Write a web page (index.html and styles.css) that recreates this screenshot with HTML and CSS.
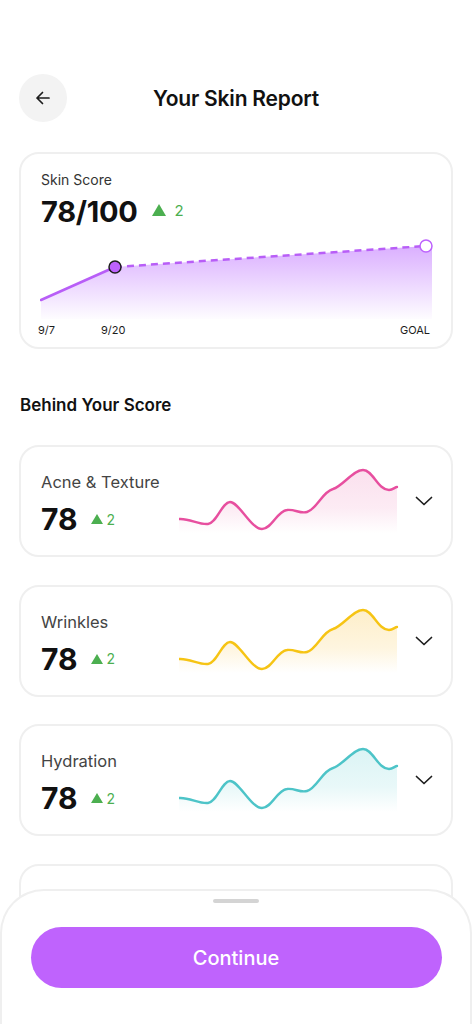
FILE: index.html
```html
<!DOCTYPE html>
<html lang="en">
<head>
<meta charset="utf-8">
<title>Your Skin Report</title>
<link rel="stylesheet" href="styles.css">
</head>
<body>
<div class="screen">
  <header class="topbar">
    <button class="back" aria-label="Back">
      <svg width="18" height="18" viewBox="0 0 18 18" fill="none" stroke="#1d1d1d" stroke-width="1.7" stroke-linecap="round" stroke-linejoin="round"><path d="M15 9H3M8.5 3.5 3 9l5.5 5.5"/></svg>
    </button>
    <h1 class="title">Your Skin Report</h1>
    <span class="spacer"></span>
  </header>

  <section class="score-card">
    <div class="card-label">Skin Score</div>
    <div class="score-row">
      <span class="score-big">78/100</span>
      <span class="delta delta-lg"><span class="tri"></span>2</span>
    </div>
    <svg class="score-chart" width="394" height="82" viewBox="0 0 394 82">
      <defs>
        <linearGradient id="gfill" x1="0" y1="0" x2="0" y2="1">
          <stop offset="0" stop-color="#d6a6ff" stop-opacity="0.9"/>
          <stop offset="1" stop-color="#d6a6ff" stop-opacity="0.03"/>
        </linearGradient>
      </defs>
      <path d="M1,61 L75,28 L386,7 L392,7 L392,80 L1,80 Z" fill="url(#gfill)"/>
      <path d="M1,61 L75,28" stroke="#b85ef7" stroke-width="2.5" fill="none" stroke-linecap="round"/>
      <path d="M75,28 L386,7" stroke="#b85ef7" stroke-width="2.5" fill="none" stroke-dasharray="7 5"/>
      <circle cx="75" cy="28" r="6" fill="#bd62fd" stroke="#1d1d1d" stroke-width="1.5"/>
      <circle cx="386" cy="7" r="6" fill="#fff" stroke="#bd62fd" stroke-width="1.5"/>
    </svg>
    <div class="chart-labels">
      <span>9/7</span>
      <span>9/20</span>
      <span class="goal">GOAL</span>
    </div>
  </section>

  <h2 class="section-title">Behind Your Score</h2>

  <div class="metrics">
    <article class="metric-card">
      <div class="metric-info">
        <div class="metric-name">Acne &amp; Texture</div>
        <div class="metric-row"><span class="metric-score">78</span><span class="delta"><span class="tri tri-sm"></span>2</span></div>
      </div>
      <svg class="spark" width="220" height="68" viewBox="0 0 220 68">
        <defs>
          <linearGradient id="gpink" x1="0" y1="0" x2="0" y2="1">
            <stop offset="0" stop-color="#f9d3e6" stop-opacity="0.7"/>
            <stop offset="0.6" stop-color="#f9d3e6" stop-opacity="0.45"/>
            <stop offset="1" stop-color="#f9d3e6" stop-opacity="0"/>
          </linearGradient>
        </defs>
        <path d="M0,54 C10,53 20,60 29,59 C38,58 43,37 51,37 C60,37 72,64 83,64 C93,64 98,46 108,45 C116,44 121,49 128,47 C138,44 143,27 154,24 C164,21 174,5 184,5 C194,5 199,25 210,25 C214,25 216,22 218,22 L218,68 L0,68 Z" fill="url(#gpink)"/>
        <path d="M0,54 C10,53 20,60 29,59 C38,58 43,37 51,37 C60,37 72,64 83,64 C93,64 98,46 108,45 C116,44 121,49 128,47 C138,44 143,27 154,24 C164,21 174,5 184,5 C194,5 199,25 210,25 C214,25 216,22 218,22" fill="none" stroke="#e74f9f" stroke-width="2.4" stroke-linecap="round"/>
      </svg>
      <svg class="chev" width="18" height="10" viewBox="0 0 18 10" fill="none" stroke="#1d1d1d" stroke-width="1.7" stroke-linecap="round" stroke-linejoin="round"><path d="M1.5 1.5 9 8.5l7.5-7"/></svg>
    </article>

    <article class="metric-card">
      <div class="metric-info">
        <div class="metric-name">Wrinkles</div>
        <div class="metric-row"><span class="metric-score">78</span><span class="delta"><span class="tri tri-sm"></span>2</span></div>
      </div>
      <svg class="spark" width="220" height="68" viewBox="0 0 220 68">
        <defs>
          <linearGradient id="gyellow" x1="0" y1="0" x2="0" y2="1">
            <stop offset="0" stop-color="#fde9b8" stop-opacity="0.75"/>
            <stop offset="0.6" stop-color="#fde9b8" stop-opacity="0.45"/>
            <stop offset="1" stop-color="#fde9b8" stop-opacity="0"/>
          </linearGradient>
        </defs>
        <path d="M0,54 C10,53 20,60 29,59 C38,58 43,37 51,37 C60,37 72,64 83,64 C93,64 98,46 108,45 C116,44 121,49 128,47 C138,44 143,27 154,24 C164,21 174,5 184,5 C194,5 199,25 210,25 C214,25 216,22 218,22 L218,68 L0,68 Z" fill="url(#gyellow)"/>
        <path d="M0,54 C10,53 20,60 29,59 C38,58 43,37 51,37 C60,37 72,64 83,64 C93,64 98,46 108,45 C116,44 121,49 128,47 C138,44 143,27 154,24 C164,21 174,5 184,5 C194,5 199,25 210,25 C214,25 216,22 218,22" fill="none" stroke="#f6c414" stroke-width="2.4" stroke-linecap="round"/>
      </svg>
      <svg class="chev" width="18" height="10" viewBox="0 0 18 10" fill="none" stroke="#1d1d1d" stroke-width="1.7" stroke-linecap="round" stroke-linejoin="round"><path d="M1.5 1.5 9 8.5l7.5-7"/></svg>
    </article>

    <article class="metric-card">
      <div class="metric-info">
        <div class="metric-name">Hydration</div>
        <div class="metric-row"><span class="metric-score">78</span><span class="delta"><span class="tri tri-sm"></span>2</span></div>
      </div>
      <svg class="spark" width="220" height="68" viewBox="0 0 220 68">
        <defs>
          <linearGradient id="gteal" x1="0" y1="0" x2="0" y2="1">
            <stop offset="0" stop-color="#d2f1f2" stop-opacity="0.8"/>
            <stop offset="0.6" stop-color="#d2f1f2" stop-opacity="0.5"/>
            <stop offset="1" stop-color="#d2f1f2" stop-opacity="0"/>
          </linearGradient>
        </defs>
        <path d="M0,54 C10,53 20,60 29,59 C38,58 43,37 51,37 C60,37 72,64 83,64 C93,64 98,46 108,45 C116,44 121,49 128,47 C138,44 143,27 154,24 C164,21 174,5 184,5 C194,5 199,25 210,25 C214,25 216,22 218,22 L218,68 L0,68 Z" fill="url(#gteal)"/>
        <path d="M0,54 C10,53 20,60 29,59 C38,58 43,37 51,37 C60,37 72,64 83,64 C93,64 98,46 108,45 C116,44 121,49 128,47 C138,44 143,27 154,24 C164,21 174,5 184,5 C194,5 199,25 210,25 C214,25 216,22 218,22" fill="none" stroke="#4dc4c8" stroke-width="2.4" stroke-linecap="round"/>
      </svg>
      <svg class="chev" width="18" height="10" viewBox="0 0 18 10" fill="none" stroke="#1d1d1d" stroke-width="1.7" stroke-linecap="round" stroke-linejoin="round"><path d="M1.5 1.5 9 8.5l7.5-7"/></svg>
    </article>

    <article class="metric-card">
      <div class="metric-info">
        <div class="metric-name">Pores</div>
        <div class="metric-row"><span class="metric-score">78</span><span class="delta"><span class="tri tri-sm"></span>2</span></div>
      </div>
    </article>
  </div>
</div>

<div class="sheet">
  <div class="handle"></div>
  <button class="continue">Continue</button>
</div>
</body>
</html>
```

FILE: styles.css
```css
* { box-sizing: border-box; }

html, body {
  margin: 0;
  padding: 0;
  background: #ffffff;
}

body {
  font-family: Inter, "Noto Sans", "Liberation Sans", sans-serif;
  color: #111;
}

.screen {
  padding: 74px 19px 40px;
}

.topbar {
  display: grid;
  grid-template-columns: 48px 1fr 48px;
  align-items: center;
  height: 48px;
}

.back {
  width: 48px;
  height: 48px;
  border-radius: 50%;
  border: none;
  background: #f3f3f3;
  display: flex;
  align-items: center;
  justify-content: center;
  padding: 0;
}

.title {
  margin: 0;
  text-align: center;
  font-size: 21px;
  font-weight: 600;
  letter-spacing: -0.2px;
  color: #111;
}

.score-card {
  margin-top: 30px;
  border: 2px solid #efefef;
  border-radius: 20px;
  padding: 17px 20px 10px 20px;
}

.card-label {
  font-size: 14px;
  line-height: 18px;
  color: #333;
}

.score-row {
  display: flex;
  align-items: center;
  gap: 15px;
  margin-top: 5px;
}

.score-big {
  font-size: 29px;
  line-height: 36px;
  font-weight: 700;
  color: #111;
  letter-spacing: -0.3px;
}

.delta {
  display: inline-flex;
  align-items: center;
  gap: 4px;
  color: #4caf50;
  font-size: 14px;
}

.delta-lg {
  font-size: 15px;
  gap: 8px;
  margin-top: -4px;
}

.tri {
  width: 0;
  height: 0;
  border-left: 7px solid transparent;
  border-right: 7px solid transparent;
  border-bottom: 12px solid #4caf50;
}

.tri-sm {
  border-left-width: 6px;
  border-right-width: 6px;
  border-bottom-width: 10px;
}

.score-chart {
  display: block;
  margin-top: 9px;
  margin-left: -1px;
}

.chart-labels {
  display: grid;
  grid-template-columns: 63px 1fr auto;
  font-size: 11px;
  line-height: 14px;
  color: #1d1d1d;
  margin-left: -3px;
  margin-right: 1px;
  margin-top: 2px;
}

.section-title {
  margin: 45px 0 0 1px;
  font-size: 17px;
  line-height: 22px;
  font-weight: 600;
  color: #111;
}

.metrics {
  margin-top: 29px;
  display: flex;
  flex-direction: column;
  gap: 27.5px;
}

.metric-card {
  height: 112px;
  border: 2px solid #efefef;
  border-radius: 20px;
  padding: 0 16px 0 20px;
  display: flex;
  align-items: center;
}

.metric-info {
  width: 138px;
  flex-shrink: 0;
  margin-top: 6px;
}

.metric-name {
  font-size: 16.5px;
  line-height: 20px;
  color: #444;
}

.metric-row {
  display: flex;
  align-items: center;
  gap: 13px;
  margin-top: 10px;
}

.metric-score {
  font-size: 30px;
  line-height: 34px;
  font-weight: 700;
  color: #111;
}

.spark {
  display: block;
  flex-shrink: 0;
  margin-top: -4px;
}

.chev {
  display: block;
  margin-left: auto;
  margin-right: 2px;
}

.sheet {
  position: fixed;
  left: 0;
  right: 0;
  bottom: 0;
  height: 135px;
  background: #fff;
  border: 2px solid #efefef;
  border-bottom: none;
  border-radius: 44px 44px 0 0;
  display: flex;
  flex-direction: column;
  align-items: center;
}

.handle {
  width: 46px;
  height: 4px;
  border-radius: 2px;
  background: #d4d4d4;
  margin-top: 8px;
}

.continue {
  margin-top: 24px;
  width: 411px;
  height: 61px;
  border: none;
  border-radius: 31px;
  background: #bf63fd;
  color: #fff;
  font-family: Inter, "Noto Sans", "Liberation Sans", sans-serif;
  font-size: 20px;
  font-weight: 500;
}
```
